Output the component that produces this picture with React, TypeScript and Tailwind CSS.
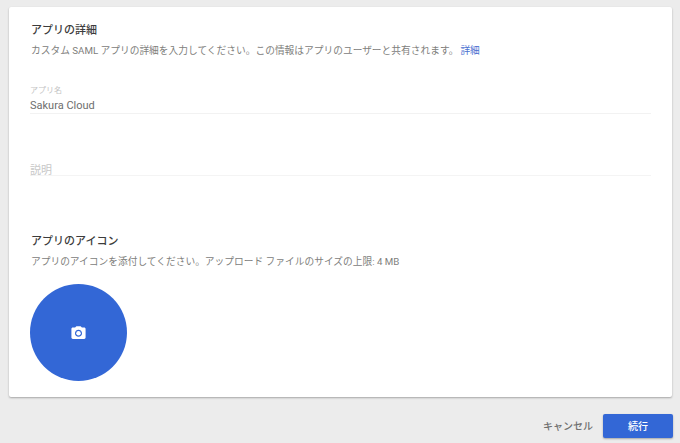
export default function App() {
  const font = { fontFamily: '"Roboto", "Noto Sans CJK JP", sans-serif' };
  return (
    <div style={font} className="w-[680px] h-[443px] bg-[#ececec] overflow-hidden flex flex-col pt-[7px] pl-[9px]">
      <div className="w-[663px] h-[390px] bg-white rounded-[2px] shadow-[0_1px_2px_rgba(0,0,0,0.3)] pl-[21px] pr-[21px] pt-[17px] flex flex-col shrink-0">
        <h2 className="text-[11px] leading-[14px] font-medium text-[#3c3c3c] m-0 pl-[1px]">アプリの詳細</h2>
        <p className="mt-[6px] text-[9.72px] leading-[14px] text-[#80807c] pl-[1px]">
          カスタム SAML アプリの詳細を入力してください。この情報はアプリのユーザーと共有されます。
          <span className="ml-[2px] text-[#4a6fd0]">詳細</span>
        </p>
        <div className="mt-[28px] text-[8px] leading-[10px] text-[#c4c4c4]">アプリ名</div>
        <div className="mt-[3px] text-[11px] leading-[14px] text-[#6e6e6e] border-b border-[#f2f2f2]">Sakura Cloud</div>
        <div className="mt-[52px] text-[11px] leading-[9px] text-[#c8c8c8] border-b border-[#f4f4f4]">説明</div>
        <h2 className="mt-[59px] text-[11px] leading-[14px] font-medium text-[#3c3c3c] pl-[1px]">アプリのアイコン</h2>
        <p className="mt-[6px] text-[9.72px] leading-[14px] text-[#80807c] pl-[1px]">アプリのアイコンを添付してください。アップロード ファイルのサイズの上限: 4 MB</p>
        <div className="mt-[15px] w-[97px] h-[97px] rounded-full bg-[#3367d6] flex items-center justify-center">
          <svg width="17" height="17" viewBox="0 0 24 24" fill="#ffffff">
            <circle cx="12" cy="13" r="3.2" fill="#ffffff" />
            <path d="M9 3 7.17 5H4c-1.1 0-2 .9-2 2v12c0 1.1.9 2 2 2h16c1.100 0 2-.9 2-2V7c0-1.100-.9-2-2-2h-3.170L15 3H9zm3 15c-2.760 0-5-2.240-5-5s2.240-5 5-5 5 2.240 5 5-2.240 5-5 5z" />
          </svg>
        </div>
      </div>
      <div className="w-[664px] flex justify-end items-center mt-[17px] gap-[10px]">
        <span className="text-[10px] font-medium text-[#6f6f6f]">キャンセル</span>
        <div className="w-[70px] h-[24px] rounded-[2px] bg-[#3367d6] shadow-[0_1px_2px_rgba(0,0,0,0.3)] flex items-center justify-center text-[10px] font-medium text-white">続行</div>
      </div>
    </div>
  );
}
